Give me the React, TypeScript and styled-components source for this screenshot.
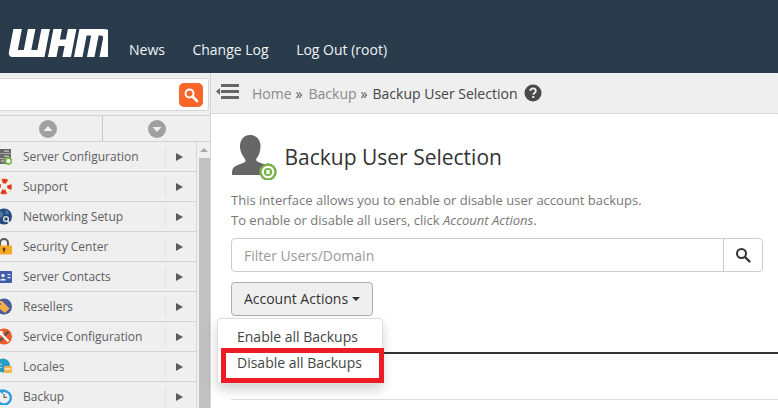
import React from "react";
import styled, { createGlobalStyle, css } from "styled-components";

const Global = createGlobalStyle`
  html, body { margin: 0; padding: 0; background: #fff; }
  body { font-family: "Open Sans", "Liberation Sans", sans-serif; overflow: hidden; }
  #root { width: 778px; height: 408px; overflow: hidden; }
`;

const lightTexture = css`
  background: repeating-conic-gradient(#f2f2f2 0 25%, #ececec 0 50%) 0 0 / 2px 2px;
`;

const Page = styled.div`
  width: 778px;
  height: 408px;
  display: flex;
  flex-direction: column;
  overflow: hidden;
`;

const Header = styled.header`
  height: 73px;
  flex: none;
  background: repeating-conic-gradient(#2b3c4f 0 25%, #283949 0 50%) 0 0 / 2px 2px;
  display: flex;
  align-items: flex-end;
  padding: 0 0 14px 8px;
  box-sizing: border-box;
`;

const LogoSvg = styled.svg`
  width: 100px;
  height: 28px;
  margin: 0 21px 2px 0;
  flex: none;
`;

const NavLink = styled.a`
  color: #f1f3f5;
  font-size: 14px;
  line-height: 19px;
  margin-right: 27.5px;
`;

const Body = styled.div`
  flex: 1;
  min-height: 0;
  display: flex;
`;

const Sidebar = styled.aside`
  width: 211px;
  flex: none;
  display: flex;
  flex-direction: column;
  ${lightTexture}
  border-right: 1px solid #d4d4d4;
  box-sizing: border-box;
`;

const SearchRow = styled.div`
  height: 42px;
  flex: none;
  box-sizing: border-box;
  padding: 5px 1px 0 0;
`;

const SearchBox = styled.div`
  height: 33px;
  background: #fff;
  border: 1px solid #d8d8d8;
  border-left: none;
  border-radius: 0 3px 3px 0;
  display: flex;
  align-items: center;
  justify-content: flex-end;
  padding-right: 5px;
  box-sizing: border-box;
  width: 209px;
`;

const OrangeButton = styled.div`
  width: 24px;
  height: 24px;
  border-radius: 5px;
  background: #f9662a;
  display: flex;
  align-items: center;
  justify-content: center;
`;

const ArrowRow = styled.div`
  height: 27px;
  flex: none;
  display: grid;
  grid-template-columns: 102px 1fr;
  border-top: 1px solid #d4d4d4;
  border-bottom: 1px solid #d4d4d4;
  box-sizing: border-box;
`;

const ArrowCell = styled.div<{ $divider?: boolean }>`
  display: flex;
  align-items: center;
  justify-content: center;
  padding-right: ${(p) => (p.$divider ? "0" : "7px")};
  border-left: ${(p) => (p.$divider ? "1px solid #c8c8c8" : "none")};
`;

const Circle = styled.svg`
  width: 18px;
  height: 18px;
`;

const MenuArea = styled.div`
  flex: 1;
  min-height: 0;
  display: flex;
  overflow: hidden;
`;

const MenuList = styled.div`
  width: 196px;
  flex: none;
  border-right: 1px solid #d8d8d8;
`;

const MenuRow = styled.div`
  height: 30px;
  box-sizing: border-box;
  border-bottom: 1px solid #d4d4d4;
  display: flex;
  align-items: center;
  overflow: hidden;
`;

const MenuIcon = styled.svg`
  width: 17px;
  height: 17px;
  margin-left: -5px;
  flex: none;
`;

const MenuLabel = styled.span`
  flex: 1;
  margin-left: 11px;
  font-size: 12px;
  color: #5f5f5f;
  white-space: nowrap;
  height: 20px;
  line-height: 19px;
`;

const Expander = styled.div`
  width: 30px;
  height: 20px;
  border-left: 1px solid #e2e2e2;
  flex: none;
  display: flex;
  align-items: center;
  justify-content: center;
`;

const Triangle = styled.span`
  width: 0;
  height: 0;
  margin-right: 4px;
  border-top: 4px solid transparent;
  border-bottom: 4px solid transparent;
  border-left: 7px solid #5c5c5c;
`;

const Scrollbar = styled.div`
  width: 14px;
  flex: none;
  display: flex;
  flex-direction: column;
`;

const ScrollUp = styled.div`
  height: 16px;
  flex: none;
  display: flex;
  align-items: center;
  justify-content: center;
`;

const ScrollCaret = styled.span`
  width: 0;
  height: 0;
  border-left: 4px solid transparent;
  border-right: 4px solid transparent;
  border-bottom: 4px solid #a8a8a8;
`;

const ScrollThumb = styled.div`
  flex: 1;
  background: #c1c1c1;
  margin: 0 1px 0 2px;
`;

const Main = styled.main`
  flex: 1;
  min-width: 0;
  display: flex;
  flex-direction: column;
  background: #fff;
`;

const Breadcrumb = styled.div`
  height: 41px;
  flex: none;
  ${lightTexture}
  border-bottom: 1px solid #d8d8d8;
  box-sizing: border-box;
  display: flex;
  align-items: center;
  padding-left: 5px;
  font-size: 14px;
`;

const CollapseIcon = styled.svg`
  width: 24px;
  height: 18px;
  margin: 0 12px 2px 0;
  flex: none;
`;

const Crumb = styled.span`
  color: #8a8a8a;
`;

const Sep = styled.span<{ $tight?: boolean }>`
  color: #555;
  margin: 0 ${(p) => (p.$tight ? "5px" : "6px")} 0 4px;
`;

const CrumbCurrent = styled.span`
  color: #444;
  margin-right: 7px;
`;

const HelpIcon = styled.svg`
  width: 18px;
  height: 18px;
  flex: none;
`;

const Content = styled.div`
  flex: 1;
  min-height: 0;
  padding: 20px 15px 0 20px;
  position: relative;
`;

const TitleRow = styled.div`
  display: flex;
  align-items: flex-end;
  height: 46px;
`;

const UserIcon = styled.svg`
  width: 48px;
  height: 46px;
  flex: none;
  margin-right: 5.5px;
`;

const Title = styled.h1`
  margin: 0 0 8px 0;
  font-size: 21px;
  line-height: 29px;
  font-weight: 400;
  color: #333;
`;

const Description = styled.p`
  margin: 10px 0 0;
  font-size: 13px;
  line-height: 20px;
  color: #777;
`;

const FilterGroup = styled.div`
  margin-top: 8px;
  height: 34px;
  display: flex;
  border: 1px solid #ccc;
  border-radius: 4px;
  box-sizing: border-box;
`;

const FilterText = styled.div`
  flex: 1;
  padding-left: 12px;
  font-size: 14px;
  line-height: 34px;
  color: #999;
`;

const FilterButton = styled.div`
  width: 38px;
  border-left: 1px solid #ccc;
  display: flex;
  align-items: center;
  justify-content: center;
`;

const ActionsButton = styled.div`
  margin-top: 10px;
  width: 142px;
  height: 34px;
  border: 1px solid #adadad;
  border-radius: 4px;
  ${lightTexture}
  box-sizing: border-box;
  padding-bottom: 2px;
  display: flex;
  align-items: center;
  justify-content: center;
  font-size: 14px;
  color: #333;
`;

const Caret = styled.span`
  width: 0;
  height: 0;
  margin: 2px 0 0 4px;
  border-top: 4px solid #333;
  border-left: 4px solid transparent;
  border-right: 4px solid transparent;
`;

const TabLine = styled.div`
  margin-top: 36px;
  margin-right: -15px;
  height: 2px;
  background: #333;
`;

const RowLine = styled.div`
  margin-top: 45px;
  margin-right: -15px;
  height: 1px;
  background: #ddd;
`;

const Dropdown = styled.div`
  position: absolute;
  left: 6px;
  top: 204px;
  width: 166px;
  height: 66px;
  box-sizing: border-box;
  background: #fff;
  border: 1px solid #ddd;
  border-radius: 4px;
  box-shadow: 0 6px 12px rgba(0, 0, 0, 0.175);
  padding: 5px 0;
  z-index: 2;
`;

const DropItem = styled.div`
  height: 26px;
  padding-left: 19px;
  font-size: 14px;
  line-height: 26px;
  color: #444;
  white-space: nowrap;
`;

const Highlight = styled.div`
  position: absolute;
  left: 10px;
  top: 234px;
  width: 163px;
  height: 35px;
  box-sizing: border-box;
  border: 5px solid #ed1c24;
  z-index: 3;
`;

const items: { label: string; icon: React.ReactNode }[] = [
  {
    label: "Server Configuration",
    icon: (
      <>
        <rect x="0" y="1" width="16" height="4.500" fill="#666" />
        <rect x="0" y="6" width="16" height="4.500" fill="#666" />
        <rect x="0" y="11" width="13" height="5" fill="#6e6e6e" />
        <rect x="9" y="2.500" width="5" height="1.200" fill="#ccc" />
        <rect x="9" y="7.500" width="5" height="1.200" fill="#ccc" />
        <rect x="6" y="12.500" width="3" height="1.200" fill="#ccc" />
        <circle cx="13.500" cy="13" r="3" fill="#fff" stroke="#7ab648" strokeWidth="1.800" />
      </>
    ),
  },
  {
    label: "Support",
    icon: (
      <>
        <circle cx="9" cy="8.500" r="5.500" fill="none" stroke="#f7f3e6" strokeWidth="4.500" />
        <circle cx="9" cy="8.500" r="7.700" fill="none" stroke="#f3dc94" strokeWidth="0.800" />
        <circle cx="9" cy="8.500" r="5.500" fill="none" stroke="#de3a2e" strokeWidth="4.500" strokeDasharray="5 3.640" strokeDashoffset="2.500" />
      </>
    ),
  },
  {
    label: "Networking Setup",
    icon: (
      <>
        <circle cx="9" cy="8.500" r="8" fill="#234a78" />
        <path d="M4 4c2-1 3 0 4 1s0 3-1 4-3 0-4-2zM10 2l3 1 1 3-3 0z" fill="#4f78a3" />
        <circle cx="11" cy="11" r="2.400" fill="none" stroke="#e6e6e6" strokeWidth="1.300" />
        <path d="M12.500 13l2 2" stroke="#e6e6e6" strokeWidth="1.800" />
      </>
    ),
  },
  {
    label: "Security Center",
    icon: (
      <>
        <path d="M5 8V5a4 4 0 0 1 8 0v3" fill="none" stroke="#555" strokeWidth="2" />
        <rect x="0" y="7.500" width="17" height="9" rx="1" fill="#f7a823" />
        <circle cx="9" cy="11" r="1.500" fill="#5a4010" />
        <rect x="8.200" y="11" width="1.600" height="3.200" fill="#5a4010" />
      </>
    ),
  },
  {
    label: "Server Contacts",
    icon: (
      <>
        <rect x="0" y="3" width="17" height="12" rx="1" fill="#3f5ca8" />
        <circle cx="8" cy="7.500" r="1.800" fill="#e8ecf7" />
        <path d="M5 12.500c0-2.500 6-2.500 6 0z" fill="#e8ecf7" />
        <rect x="12.500" y="6" width="3" height="1.200" fill="#e8ecf7" />
        <rect x="12.500" y="9" width="3" height="1.200" fill="#e8ecf7" />
      </>
    ),
  },
  {
    label: "Resellers",
    icon: (
      <>
        <circle cx="9" cy="8.500" r="8" fill="#4b5a9c" />
        <path d="M1 3h6l7.500 7.500-4.500 4.500-9-7z" fill="#f4b04a" />
        <circle cx="5" cy="6" r="1" fill="#4b5a9c" />
      </>
    ),
  },
  {
    label: "Service Configuration",
    icon: (
      <>
        <circle cx="9" cy="8.500" r="8" fill="#f15a29" />
        <path d="M13.500 3.500 5 13" stroke="#555" strokeWidth="2.200" />
        <path d="M5 4.500 13.500 13.500" stroke="#fff" strokeWidth="2.400" />
        <path d="M3 3l5 0-1 4z" fill="#fff" />
      </>
    ),
  },
  {
    label: "Locales",
    icon: (
      <>
        <circle cx="8" cy="7.500" r="7" fill="#2a9bc4" />
        <path d="M2 7c2-2 3 0 5-1M3 10c2-1 3 0 4-1" stroke="#cfeaf3" fill="none" />
        <rect x="9" y="8" width="8" height="7" rx="1" fill="#f5b54c" />
        <rect x="10" y="10.500" width="6" height="1" fill="#fff" />
      </>
    ),
  },
  {
    label: "Backup",
    icon: (
      <>
        <path d="M5.500 3.800A6.800 6.800 0 1 1 2.200 9" fill="none" stroke="#2b9be0" strokeWidth="2.400" />
        <path d="M2.500 1.500H8v5z" fill="#2b9be0" />
        <path d="M9 6v3.400h3" fill="none" stroke="#666" strokeWidth="1.200" />
      </>
    ),
  },
];

export default function App() {
  return (
    <Page>
      <Global />
      <Header>
        <LogoSvg viewBox="0 0 100 28" aria-label="WHM">
          <g transform="translate(5.400 0) skewX(-11)" fill="#fff">
            <path d="M0 0h8.500v21h6V0h7.500v21h6V0h8.500v28H5c-3 0-5-2-5-5z" />
            <path d="M40 0h8.500v10.500h6V0h8.500v28h-8.500V17h-6v11H40z" />
            <path d="M66 0h24c6 0 10 3 10 9v19h-8.500V10c0-2.500-1-3.500-3-3.500H86.500V28H79V6.500h-4.500V28H66z" />
          </g>
        </LogoSvg>
        <NavLink>News</NavLink>
        <NavLink>Change Log</NavLink>
        <NavLink>Log Out (root)</NavLink>
      </Header>
      <Body>
        <Sidebar>
          <SearchRow>
            <SearchBox>
              <OrangeButton>
                <svg width="16" height="16" viewBox="0 0 16 16">
                  <circle cx="6.500" cy="6.500" r="4" fill="none" stroke="#fff" strokeWidth="2" />
                  <path d="M9.500 9.500 14 14" stroke="#fff" strokeWidth="2.600" strokeLinecap="round" />
                </svg>
              </OrangeButton>
            </SearchBox>
          </SearchRow>
          <ArrowRow>
            <ArrowCell>
              <Circle viewBox="0 0 18 18">
                <circle cx="9" cy="9" r="9" fill="#a0a0a0" />
                <path d="M4.500 11 9 6l4.500 5z" fill="#f0f0f0" />
              </Circle>
            </ArrowCell>
            <ArrowCell $divider>
              <Circle viewBox="0 0 18 18">
                <circle cx="9" cy="9" r="9" fill="#a0a0a0" />
                <path d="M4.500 7 9 12l4.500-5z" fill="#f0f0f0" />
              </Circle>
            </ArrowCell>
          </ArrowRow>
          <MenuArea>
            <MenuList>
              {items.map((it) => (
                <MenuRow key={it.label}>
                  <MenuIcon viewBox="0 0 17 17">{it.icon}</MenuIcon>
                  <MenuLabel>{it.label}</MenuLabel>
                  <Expander>
                    <Triangle />
                  </Expander>
                </MenuRow>
              ))}
            </MenuList>
            <Scrollbar>
              <ScrollUp>
                <ScrollCaret />
              </ScrollUp>
              <ScrollThumb />
            </Scrollbar>
          </MenuArea>
        </Sidebar>
        <Main>
          <Breadcrumb>
            <CollapseIcon viewBox="0 0 24 18">
              <path d="M0 8.500 4 5v7z" fill="#666" />
              <rect x="5" y="1" width="18" height="3" fill="#666" />
              <rect x="5" y="7" width="18" height="3" fill="#666" />
              <rect x="5" y="13" width="18" height="3" fill="#666" />
            </CollapseIcon>
            <Crumb>Home</Crumb>
            <Sep>»</Sep>
            <Crumb>Backup</Crumb>
            <Sep $tight>»</Sep>
            <CrumbCurrent>Backup User Selection</CrumbCurrent>
            <HelpIcon viewBox="0 0 18 18">
              <circle cx="9" cy="9" r="8.500" fill="#4a4a4a" />
              <path d="M6.300 7c0-3.500 5.500-3.500 5.500 0 0 2-2.500 2-2.500 3.700" fill="none" stroke="#f0f0f0" strokeWidth="1.800" />
              <rect x="8.300" y="12" width="2" height="2" fill="#f0f0f0" />
            </HelpIcon>
          </Breadcrumb>
          <Content>
            <TitleRow>
              <UserIcon viewBox="0 0 48 46">
                <path
                  fill="#666"
                  d="M19 1c7 0 11 5.500 10.500 12.500-.4 5-2 8.500-4 11-1 2 0 3 3 4 3.500 1.300 6 2 8 3-3 2-4.500 5-4 9.500H1c0-5 .5-7 3-8.500 3-2 8-3 10-4.500 1-1 .5-2-1-4.500C11 20.500 8.500 16 9 11.500 9.500 5.500 13 1 19 1z"
                />
                <circle cx="37" cy="38" r="7.500" fill="#fff" stroke="#76b043" strokeWidth="2.400" />
                <circle cx="37" cy="38" r="3.200" fill="none" stroke="#76b043" strokeWidth="1.800" />
                <path d="M32.500 37.500h3.500l-1.700 2.400zM41.500 38.500h-3.500l1.700-2.400z" fill="#76b043" />
              </UserIcon>
              <Title>Backup User Selection</Title>
            </TitleRow>
            <Description>
              This interface allows you to enable or disable user account backups.
              <br />
              To enable or disable all users, click <em>Account Actions</em>.
            </Description>
            <FilterGroup>
              <FilterText>Filter Users/Domain</FilterText>
              <FilterButton>
                <svg width="16" height="16" viewBox="0 0 16 16">
                  <circle cx="6.500" cy="6.500" r="4.500" fill="none" stroke="#333" strokeWidth="2" />
                  <path d="M10 10l4.500 4.500" stroke="#333" strokeWidth="2.400" strokeLinecap="round" />
                </svg>
              </FilterButton>
            </FilterGroup>
            <ActionsButton>
              Account Actions
              <Caret />
            </ActionsButton>
            <TabLine />
            <RowLine />
            <Dropdown>
              <DropItem>Enable all Backups</DropItem>
              <DropItem>Disable all Backups</DropItem>
            </Dropdown>
            <Highlight />
          </Content>
        </Main>
      </Body>
    </Page>
  );
}
